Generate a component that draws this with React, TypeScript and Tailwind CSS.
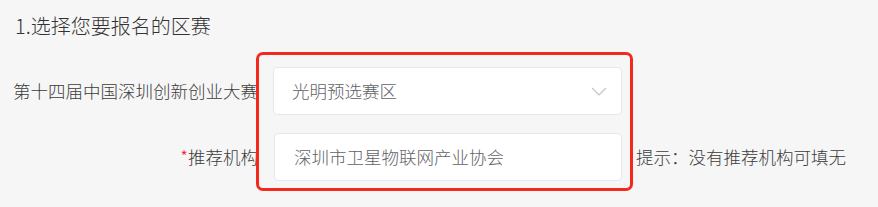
const font = { fontFamily: '"Noto Sans CJK SC", "Noto Sans", sans-serif' }

export default function App() {
  return (
    <div className="relative w-[878px] h-[207px] bg-[#f6f6f6] text-[#333] font-light" style={font}>
      {/* title */}
      <div className="h-[52px] flex items-center pl-[15px] text-[20px] text-[#333]">1.选择您要报名的区赛</div>

      {/* region select */}
      <div className="mt-[15px] flex items-center h-[48px]">
        <div className="w-[258px] text-right text-[17.5px] text-[#3c3c3c] whitespace-nowrap">第十四届中国深圳创新创业大赛</div>
        <div className="ml-[15px] w-[349px] h-[48px] bg-white border border-[#e4e7ed] rounded-[4px] flex items-center justify-between pl-[18px] pr-[14px]">
          <span className="text-[17.5px] text-[#606266]">光明预选赛区</span>
          <svg width="16" height="9" viewBox="0 0 16 9" fill="none" stroke="#c0c4cc" strokeWidth="1.2">
            <polyline points="1,1 8,8 15,1" />
          </svg>
        </div>
      </div>

      {/* recommender */}
      <div className="mt-[18px] flex items-center h-[48px]">
        <div className="w-[258px] text-right text-[17.5px] text-[#3c3c3c] whitespace-nowrap">
          <span className="text-[#f5222d]">*</span>推荐机构
        </div>
        <div className="ml-[16px] w-[348px] h-[48px] bg-white border border-[#e4e7ed] rounded-[4px] flex items-center pl-[19px]">
          <span className="text-[17.5px] text-[#606266]">深圳市卫星物联网产业协会</span>
        </div>
        <div className="ml-[14px] text-[17.5px] text-[#3c3c3c] whitespace-nowrap">提示：没有推荐机构可填无</div>
      </div>

      {/* red annotation */}
      <div className="absolute left-[256px] top-[52px] w-[377px] h-[139px] border-[3px] border-[#f5281e] rounded-[7px] pointer-events-none" />
    </div>
  )
}
